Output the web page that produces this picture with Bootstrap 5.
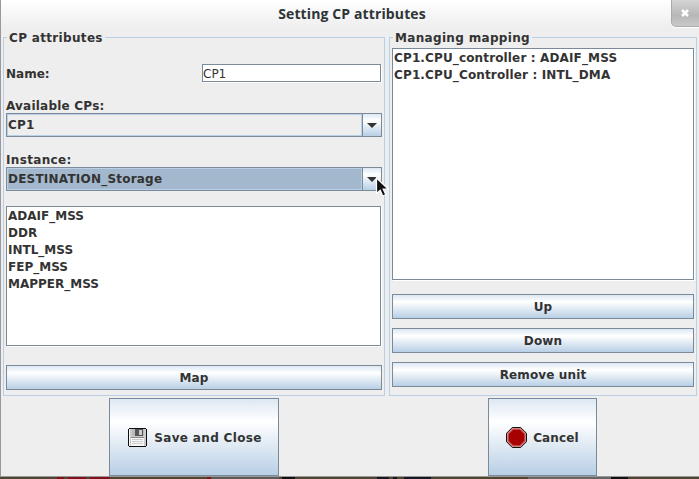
<!DOCTYPE html>
<html lang="en">
<head>
<meta charset="utf-8">
<title>Setting CP attributes</title>
<link href="https://cdn.jsdelivr.net/npm/bootstrap@5.3.0/dist/css/bootstrap.min.css" rel="stylesheet">
<style>
body{width:699px;height:479px;font:bold 12px/17px "DejaVu Sans",sans-serif;color:#333;background:#514a39}
.dialog-win{height:477px;background:#eee;border-left:1px solid #999;border-bottom:1px solid #999}
.title-bar{height:28px;background:linear-gradient(#fff,#eee);font:bold 14px/28px "Open Sans",sans-serif;letter-spacing:.12px;color:#2e3436;padding-left:4px}
.close-box{width:34px;height:27px;right:-6px;top:0;border:1px solid #aaa;border-top:0;border-radius:0 0 5px 5px;background:linear-gradient(#d4d4d4,#b7b7b7 60%,#c9c9c9);box-shadow:0 1px #fff;padding:0}
.close-box svg{left:8px;top:8px}
.panes{height:368px;padding:0 2px}
.group-box{height:359px;margin-top:9px;border:1px solid #b8cfe5;padding:0 2px}
.group-title{width:fit-content;line-height:18px;height:16px;margin:-9px 0 0 1px;padding:0 2px;background:#eee;letter-spacing:.33px}
.left-box{width:382px}.right-box{width:308px;margin-left:4px}
.name-row{height:18px;margin-top:19px}
.name-row label{padding-top:2px}
.name-field{width:179px;height:18px;border:1px solid #7a8a99;background:#fff;padding:1px 0 0;font:12px/16px "DejaVu Sans",sans-serif;color:#333;box-shadow:1px 1px #fff;border-radius:0;margin-right:1px}
.field-label{height:16px;line-height:19px;margin-top:15px;letter-spacing:.22px}
.instance-label{margin-top:14px;letter-spacing:.33px}
.combo-box{height:24px;width:376px;border:1px solid #7a8a99}
.combo-value{border:1px solid #b8cfe5;line-height:20px;letter-spacing:.22px}
.combo-box.focused .combo-value{background:#a3b8cc}
.combo-arrow{width:19px;border-left:1px solid #7a8a99;background:linear-gradient(#dde8f3,#fff 30%,#b8cfe5)}
.combo-arrow svg{margin:9px 0 0 4px}
.list-box{border:1px solid #7a8a99;background:#fff;padding:1px 0 0 1px;box-shadow:1px 1px #fff;margin:0}
.unit-list{width:375px;height:140px;margin-top:15px}
.map-list{width:302px;height:232px;margin-top:3px;letter-spacing:.14px}
.metal-btn{border:1px solid #7a8a99;border-radius:0;background:linear-gradient(#dde8f3,#fff 30%,#b8cfe5);color:#333;font:inherit;padding:0;height:25px;line-height:22px;width:100%;letter-spacing:.12px}
.map-btn{margin-top:19px}
.order-btns{gap:9px;padding-top:14px}
.action-bar{height:79px;padding:2px 0 0 108px}
.action-bar .metal-btn{height:78px;width:170px;gap:7px;padding-left:2px;letter-spacing:.33px}
.action-bar .metal-btn span{padding-top:1px}
.action-bar .cancel-btn{width:109px;margin-left:209px;gap:6px;padding-left:0;letter-spacing:.15px}
.below{height:2px;background:linear-gradient(90deg,#4e4633 0 57px,#811018 57px 64px,#4e4633 64px 68px,#811018 68px 86px,#4e4633 86px 90px,#811018 90px 110px,#4e4633 110px 207px,#811018 207px 211px,#5b5b5b 211px 279px,#4e4633 279px 282px,#111 282px 295px,#4e4633 295px 377px,#151723 377px 389px,#4e4633 389px 393px,#151723 393px 397px,#4e4633 397px 404px,#151723 404px 431px,#4e4633 431px 528px,#666 528px 611px,#111 611px 628px,#4e4633 628px)}
.mouse-pointer{left:375px;top:177px}
</style>
<script src="https://cdn.jsdelivr.net/npm/bootstrap@5.3.0/dist/js/bootstrap.bundle.min.js"></script>
</head>
<body class="overflow-hidden position-relative">
<main class="dialog-win">
<header class="title-bar text-center position-relative">Setting CP attributes
<button class="close-box btn position-absolute" aria-label="Close"><svg class="position-absolute" width="10" height="10" viewBox="0 0 10 10"><path d="M2 2l6 6M8 2L2 8" stroke="#fff" stroke-width="2.6"/></svg></button>
</header>
<div class="panes d-flex">
<section class="group-box left-box">
<div class="group-title">CP attributes</div>
<div class="name-row d-flex justify-content-between"><label for="cp-name">Name:</label><input id="cp-name" class="name-field" value="CP1"></div>
<div class="field-label">Available CPs:</div>
<div class="combo-box d-flex"><div class="combo-value flex-grow-1">CP1</div><div class="combo-arrow"><svg class="d-block" width="10" height="5"><path d="M0 0h10L5 5z" fill="#333"/></svg></div></div>
<div class="field-label instance-label">Instance:</div>
<div class="combo-box focused d-flex"><div class="combo-value flex-grow-1">DESTINATION_Storage</div><div class="combo-arrow"><svg class="d-block" width="10" height="5"><path d="M0 0h10L5 5z" fill="#333"/></svg></div></div>
<ul class="list-box unit-list list-unstyled"><li>ADAIF_MSS</li><li>DDR</li><li>INTL_MSS</li><li>FEP_MSS</li><li>MAPPER_MSS</li></ul>
<button class="metal-btn map-btn d-block">Map</button>
</section>
<section class="group-box right-box">
<div class="group-title">Managing mapping</div>
<ul class="list-box map-list list-unstyled"><li>CP1.CPU_controller : ADAIF_MSS</li><li>CP1.CPU_Controller : INTL_DMA</li></ul>
<div class="order-btns d-flex flex-column"><button class="metal-btn">Up</button><button class="metal-btn">Down</button><button class="metal-btn">Remove unit</button></div>
</section>
</div>
<footer class="action-bar d-flex">
<button class="metal-btn d-flex align-items-center justify-content-center">
<svg width="19" height="19" viewBox="0 0 19 19" shape-rendering="crispEdges"><path d="M1 0h17v1h1v17h-1v1H1v-1H0V1h1z" fill="#111"/><path d="M1 1h17v17H1z" fill="#ccc"/><path d="M1 1h1v17H1zM3 9h13v9H3z" fill="#f7f7f7"/><path d="M4 1h12v7H4z" fill="#bbb"/><path d="M7 1h8v7H7z" fill="#555"/><path d="M11 2h3v5h-3z" fill="#ccc"/><path d="M3 9h13v1H3z" fill="#888"/><path d="M4 11h11v1H4zM4 13h11v1H4zM4 15h11v1H4z" fill="#ccc"/></svg>
<span>Save and Close</span></button>
<button class="metal-btn cancel-btn d-flex align-items-center justify-content-center">
<svg width="21" height="21" viewBox="0 0 21 21"><path d="M6.3.5h8.4l5.800 5.800v8.400l-5.800 5.800H6.300L.500 14.700V6.300z" fill="#d98080" stroke="#111"/><path d="M7 2.500h7L18.500 7v7L14 18.500H7L2.500 14V7z" fill="#a80000" stroke="#b94a4a"/></svg>
<span>Cancel</span></button>
</footer>
</main>
<div class="below"></div>
<svg class="mouse-pointer position-absolute" width="15" height="21" viewBox="0 0 15 21"><path d="M1.500 1v15.500l3.700-3.300 2.600 5.800 3-1.300-2.600-5.700h5z" fill="#111" stroke="#fff" stroke-width="1.200"/></svg>
</body>
</html>
